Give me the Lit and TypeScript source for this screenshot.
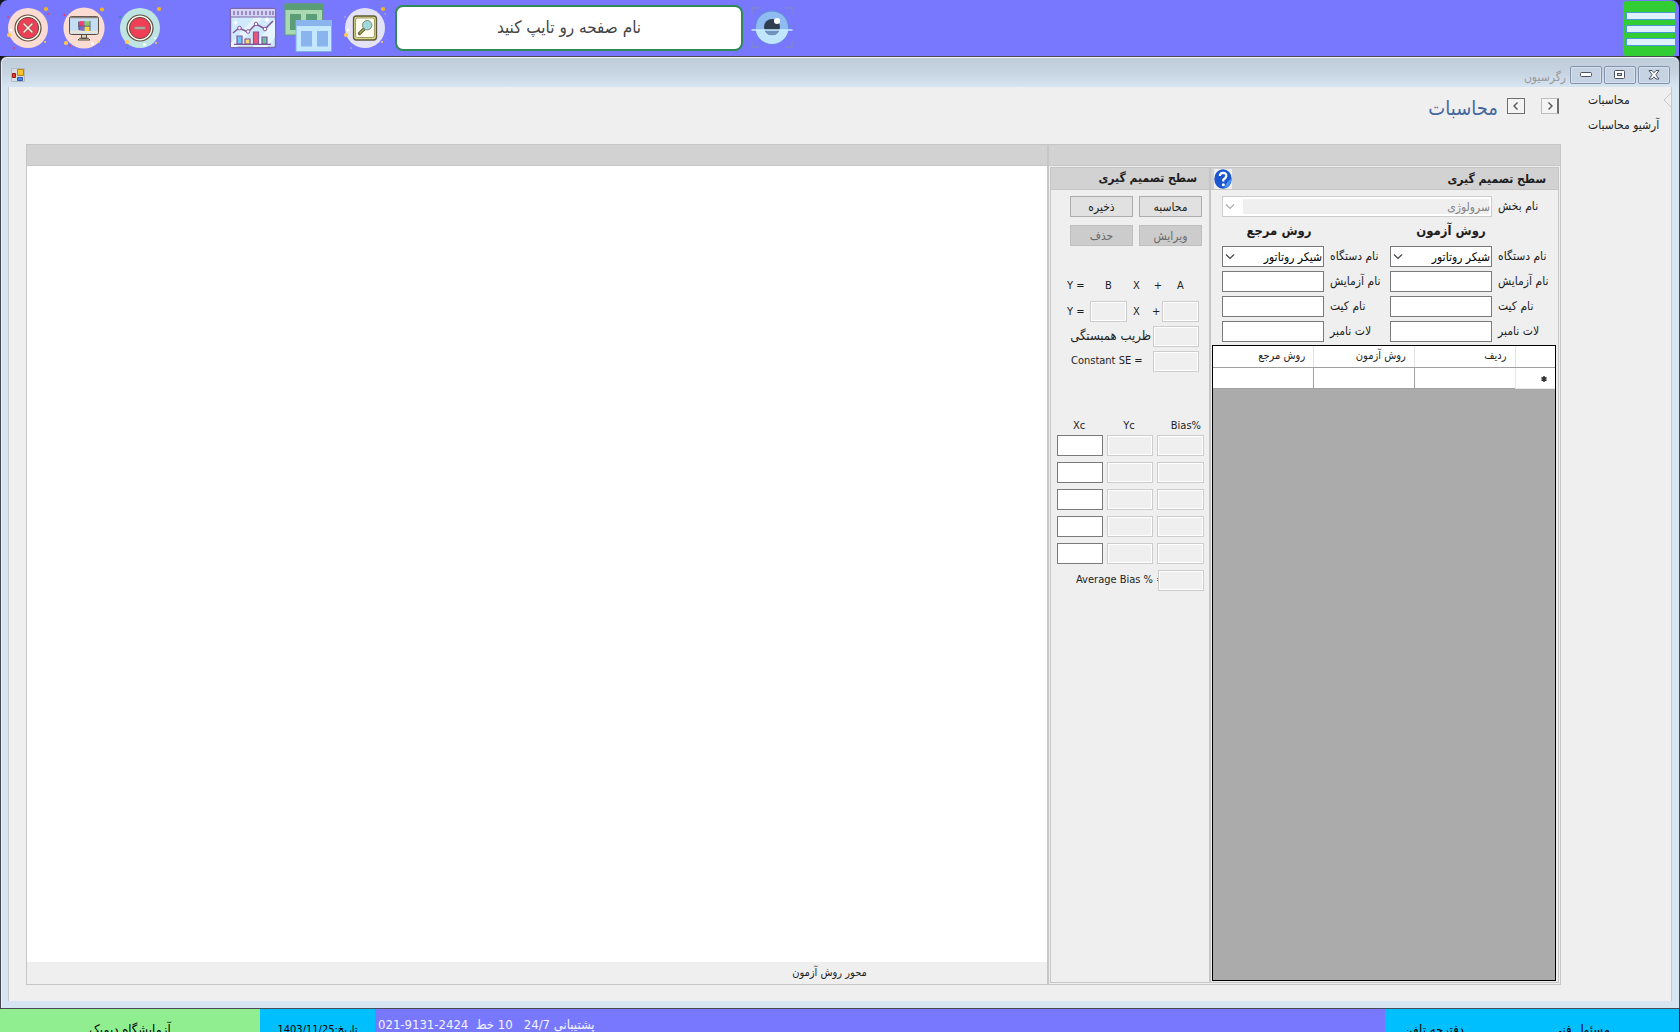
import { LitElement, html, css, svg } from "lit";
import { customElement } from "lit/decorators.js";

const chevron = svg`<path d="M1 1.5 L5 5.5 L9 1.5" fill="none" stroke="currentColor" stroke-width="1.2"/>`;

const closeIcon = html`<svg viewBox="0 0 44 44" width="44" height="44" aria-hidden="true">
  <circle cx="22" cy="22" r="20" fill="#fadcd2"/>
  <circle cx="22" cy="22" r="13" fill="#fffbef" stroke="#5d4c42" stroke-width="1.2"/>
  <circle cx="22" cy="22" r="10.6" fill="#ef3e55" stroke="#5d4c42" stroke-width="1"/>
  <path d="M18 18 L26 26 M26 18 L18 26" stroke="#8a5a50" stroke-width="2.8" stroke-linecap="round"/>
  <path d="M18 18 L26 26 M26 18 L18 26" stroke="#fff4e6" stroke-width="1.5" stroke-linecap="round"/>
  <circle cx="40" cy="3" r="2.1" fill="#f3b51f"/><circle cx="42" cy="8" r="1" fill="#ef3e55"/>
  <circle cx="3" cy="29" r="2.1" fill="#ffc94d"/><circle cx="5" cy="24" r="1.3" fill="#fff"/>
  <circle cx="2" cy="11" r="1" fill="#ef3e55"/><circle cx="8" cy="42" r="1" fill="#ef3e55"/><circle cx="39" cy="36" r="1.1" fill="#ffc94d"/>
</svg>`;

const monitorIcon = html`<svg viewBox="0 0 44 44" width="44" height="44" aria-hidden="true">
  <circle cx="22" cy="22" r="20.6" fill="#fadcd2"/>
  <rect x="7.500" y="10.500" width="29" height="18" rx="2" fill="#c3ddf3" stroke="#5d4c42"/>
  <path d="M8 26 H36" stroke="#e8e4d8" stroke-width="2.6"/>
  <path d="M8 11.500 H36" stroke="#8b8178" stroke-width="1.500"/>
  <path d="M19.500 29 V32.500 H24.500 V29 M16 34 Q17 32 20 32 H24 Q27 32 28 34 Z" fill="#d9d4c0" stroke="#5d4c42"/>
  <path d="M17 15.500 Q19 14.800 21.500 15.300 V20 H16.700 Z" fill="#ef3e74"/>
  <path d="M22.500 15.300 H27.500 V20 H22.500 Z" fill="#8cc66a"/>
  <path d="M16.700 20.500 H21.500 V25 Q19 24 17 24.200 Z" fill="#7a63c9"/>
  <path d="M22.500 20.500 H27.500 V25 H22.500 Z" fill="#f3d94b"/>
  <path d="M22 15 V25 M16.500 20.200 H28 M16.500 15.500 L17 24 M28 15 V25" stroke="#4f4660" stroke-width=".8" fill="none"/>
  <circle cx="40" cy="3.500" r="2.100" fill="#f3b51f"/><circle cx="2.500" cy="9" r="1.100" fill="#ef3e55"/>
  <circle cx="4" cy="37" r="2.100" fill="#ffc94d"/><circle cx="8" cy="40" r="1" fill="#ef3e55"/>
  <circle cx="30.500" cy="37.500" r="1.500" fill="#fff"/><circle cx="37" cy="36" r="1" fill="#ffc94d"/>
</svg>`;

const minusIcon = html`<svg viewBox="0 0 44 44" width="44" height="44" aria-hidden="true">
  <circle cx="22" cy="22" r="20" fill="#bfe5e2"/>
  <circle cx="22" cy="22" r="13" fill="#fffbef" stroke="#5d4c42" stroke-width="1.2"/>
  <circle cx="22" cy="22" r="10.600" fill="#ef3e55" stroke="#5d4c42" stroke-width="1"/>
  <path d="M17.500 22 H26.500" stroke="#8d8a80" stroke-width="2.800" stroke-linecap="round"/>
  <path d="M17.500 22 H26.500" stroke="#c9c5b5" stroke-width="1.200" stroke-linecap="round"/>
  <circle cx="41" cy="3" r="2.100" fill="#f3b51f"/><circle cx="2" cy="11" r="1.100" fill="#1c9c9c"/>
  <circle cx="9" cy="36" r="2.100" fill="#ffc94d"/><circle cx="9.500" cy="42" r="1" fill="#1c9c9c"/>
  <circle cx="26.500" cy="38.500" r="1.500" fill="#fff"/><circle cx="38" cy="37" r="1.100" fill="#ffc94d"/><circle cx="37" cy="32" r="1" fill="#fff"/>
</svg>`;

const chartIcon = html`<svg viewBox="0 0 48 42" width="48" height="42" aria-hidden="true">
  <rect x="1.500" y="1.500" width="45" height="39" rx="1.500" fill="#cfeafc" stroke="#7d68ac" stroke-width="1.400"/>
  <path d="M24 40 L46 12 V30 L38 40 Z M2 36 L26 10 H34 L8 40 H2 Z" fill="#e6f5ff"/>
  <path d="M2 2 H46 V10 H2 Z" fill="#d5d3f3"/><path d="M2 10 H46" stroke="#7d68ac" stroke-width="1.200"/>
  ${[5, 9, 13, 17, 21, 25, 29, 33, 37, 41, 44].map((x) => svg`<path d="M${x} 4 V8" stroke="#7d68ac" stroke-width="1.300"/>`)}
  <path d="M4 26 L10 21 L19 25 L27 17 L36 22 L44 14" fill="none" stroke="#84559a" stroke-width="1.500"/>
  <circle cx="10.500" cy="21" r="1.800" fill="#fff" stroke="#84559a"/><circle cx="19" cy="24.500" r="1.800" fill="#fff" stroke="#84559a"/>
  <circle cx="27" cy="17" r="1.800" fill="#fff" stroke="#84559a"/><circle cx="36" cy="22" r="1.800" fill="#fff" stroke="#84559a"/>
  <g stroke="#84559a" stroke-width="1.200"><path d="M8 37 V29 H13 V37 Z" fill="#6cc6f2"/><path d="M16 37 V32 H21 V37 Z" fill="#f6dc76"/>
  <path d="M24.500 37 V25 H29.500 V37 Z" fill="#ee5777"/><path d="M33 37 V30 H38 V37 Z" fill="#6ac3a2"/><path d="M5 37.300 H42"/></g>
  <path d="M6.500 12.500 L7.300 15 L9.500 15.700 L7.300 16.500 L6.500 19 L5.700 16.500 L3.500 15.700 L5.700 15 Z M38 10 L39 12 L41 13 L39 14 L38 16 L37 14 L35 13 L37 12 Z" fill="#fff"/>
</svg>`;

const windowsIcon = html`<svg viewBox="0 0 48 50" width="48" height="50" aria-hidden="true">
  <path d="M1 1 H38.500 V32 H1 Z" fill="#a9d8b1" stroke="#5f9f79"/><path d="M.5 .5 H39 V7 H.5 Z" fill="#5b9d76"/>
  <path d="M6 11 H17 V27 H6 Z M22 11 H33 V20 H22 Z" fill="#5b9d76"/>
  <path d="M12 17.500 H47.500 V48.500 H12 Z" fill="#c3e8ff" stroke="#7daee4"/><path d="M12 17 H48 V23 H12 Z" fill="#8ab4ee"/>
  <path d="M17 28 H28 V43.500 H17 Z M33 28 H44 V43.500 H33 Z" fill="#8ab4ee"/>
</svg>`;

const searchIcon = html`<svg viewBox="0 0 44 44" width="44" height="44" aria-hidden="true">
  <circle cx="22" cy="22" r="20" fill="#e3e2f6"/>
  <rect x="10.500" y="10" width="23" height="24" rx="3" fill="#d9d787" stroke="#5f5b38" stroke-width="1.300"/>
  <rect x="12.500" y="12" width="19" height="19.500" rx="2" fill="#fffbef" stroke="#8c8850" stroke-width=".8"/>
  <path d="M21 23 L16.500 27.500" stroke="#5f6138" stroke-width="3.200" stroke-linecap="round"/>
  <path d="M20.500 23.500 L17 27" stroke="#a9ad4f" stroke-width="1.400" stroke-linecap="round"/>
  <circle cx="24.200" cy="19.200" r="4.700" fill="#9fdad9" stroke="#768a82"/>
  <circle cx="40" cy="3" r="2.100" fill="#f3b51f"/><circle cx="42" cy="8" r="1" fill="#a5a3c8"/><circle cx="2" cy="11" r="1" fill="#a5a3c8"/>
  <circle cx="3" cy="29" r="2.100" fill="#ffc94d"/><circle cx="5" cy="24" r="1.300" fill="#fff"/>
  <circle cx="8" cy="42" r="1" fill="#a5a3c8"/><circle cx="39" cy="36" r="1.100" fill="#ffc94d"/>
</svg>`;

const eyeIcon = html`<svg viewBox="0 0 42 42" width="42" height="42" aria-hidden="true">
  <path d="M1 7 V1 H8 M34 1 H41 V7 M41 34 V40 H34 M8 40 H1 V34" fill="none" stroke="#7d88c9" stroke-width="1.400"/>
  <circle cx="21" cy="20.500" r="16.500" fill="#8ebcf0" stroke="#5b8fd0" stroke-width="1"/>
  <path d="M4.700 23 H37.300 A16.500 16.500 0 0 1 4.700 23 Z" fill="#bfe6fd"/>
  <circle cx="21" cy="20" r="8" fill="#303f50"/><path d="M13.500 23 H28.500 A8 8 0 0 1 13.500 23 Z" fill="#6f93bd"/>
  <circle cx="26" cy="14" r="3" fill="#fff"/><path d="M.5 23 H41.500" stroke="#c9edff" stroke-width="1.300"/>
</svg>`;

const helpIcon = html`<svg viewBox="0 0 18 20" width="18" height="20" aria-hidden="true">
  <rect width="18" height="20" fill="#efefef"/><ellipse cx="9" cy="10" rx="8.700" ry="9.800" fill="#1c57d0"/>
  <path d="M10 19.500 Q17 17 17.600 10 Q13 11 10 19.500 Z" fill="#4b93f2"/>
  <path d="M5.800 7 Q6 3.800 9.200 3.800 Q12.500 4 12.300 7 Q12 9 9.300 10.600 V12.500" fill="none" stroke="#fff" stroke-width="2.200"/>
  <circle cx="9.300" cy="15.800" r="1.500" fill="#fff"/>
</svg>`;

@customElement("app-toolbar")
class AppToolbar extends LitElement {
  static styles = css`
    :host { display: block; }
    .bar { display: flex; align-items: center; height: 56px; padding: 0 4px 0 6px; background: #7878ff; border-radius: 8px 8px 0 0; }
    button { display: flex; padding: 0; border: 0; background: none; }
    .system { display: flex; gap: 12px; }
    .pages { display: flex; align-items: center; gap: 7px; margin-left: 67px; }
    .find { margin-left: 4px; }
    .search { width: 348px; height: 46px; box-sizing: border-box; margin: 0 8px; padding: 0 12px 3px; border: 2px solid #2e8b57; border-radius: 8px;
      background: #fff; text-align: center; font: 17px "DejaVu Sans Condensed", "DejaVu Sans", sans-serif; color: #444; outline: none; }
    .search::placeholder { color: #444; opacity: 1; }
    .menu { width: 52px; height: 55px; box-sizing: border-box; margin: 1px 0 0 auto; padding: 1px 0 0 3px; flex-direction: column; justify-content: center; gap: 5px; border-radius: 4px; background: #32cd32; }
    .line { height: 8px; box-sizing: border-box; border: 1px solid #4a98d8; border-right: 0; background: #dff0ff; }
  `;
  render() {
    return html`<header class="bar">
      <div class="system">
        <button aria-label="بستن">${closeIcon}</button>
        <button aria-label="دسکتاپ">${monitorIcon}</button>
        <button aria-label="کوچک کردن">${minusIcon}</button>
      </div>
      <div class="pages">
        <button aria-label="نمودار">${chartIcon}</button>
        <button aria-label="پنجره‌ها">${windowsIcon}</button>
        <button class="find" aria-label="جستجو">${searchIcon}</button>
      </div>
      <input class="search" dir="rtl" type="text" aria-label="نام صفحه" placeholder="نام صفحه رو تایپ کنید" />
      <button aria-label="نمایش">${eyeIcon}</button>
      <button class="menu" aria-label="منو"><span class="line"></span><span class="line"></span><span class="line"></span></button>
    </header>`;
  }
}

@customElement("decision-inputs")
class DecisionInputs extends LitElement {
  static styles = css`
    :host { display: flex; flex-direction: column; font: 12px "DejaVu Sans Condensed", "DejaVu Sans", sans-serif; color: #1e1e1e; }
    .title { display: flex; align-items: center; justify-content: space-between; height: 21px; margin: 0; padding: 0 12px 0 3px; background: #d2d2d2; border-bottom: 1px solid #c6c6c6; }
    h2 { margin: 0; font-size: 12px; line-height: 20px; }
    .help { display: flex; padding: 0; border: 0; background: none; }
    .form { display: grid; grid-template-columns: 60px 102px 54px 102px; column-gap: 6px; row-gap: 4px; align-items: center; padding: 6px 0 3px 12px; }
    .form > * { height: 21px; box-sizing: border-box; }
    label { line-height: 20px; text-align: left; white-space: nowrap; }
    .wide { grid-column: 2 / -1; }
    h3 { margin: 0; font-size: 13px; line-height: 20px; text-align: center; }
    h3.head { grid-column: 2; padding-left: 20px; }
    h3.ref { grid-column: 4; padding-left: 12px; }
    input, select { width: 100%; height: 21px; box-sizing: border-box; border: 1px solid #7a7a7a; border-radius: 0; background: #fff; font: inherit; color: #000; padding: 0 1px; outline: none; }
    select { appearance: none; opacity: 1; }
    select:disabled { border-color: #cccccc; color: #838383; background: linear-gradient(90deg, #fff 20px, #efefef 20px); box-shadow: inset 0 0 0 2px #fff; }
    .pick { position: relative; }
    .pick svg { position: absolute; left: 3px; top: 7px; color: #444; pointer-events: none; }
    .wide svg { color: #aaa; }
    .grid { flex: 1; margin: 0 2px 1px 1px; border: 1px solid #000; background: #ababab; }
    table { width: 100%; border-collapse: collapse; table-layout: fixed; background: #fff; font-size: 11px; }
    th, td { height: 21px; padding: 0 8px 0 0; box-sizing: border-box; font-weight: 400; text-align: right; line-height: 18px; }
    th { border-left: 1px solid #e3e3e3; border-bottom: 1px solid #a0a0a0; color: #1e1e1e; }
    td { border-left: 1px solid #a0a0a0; border-bottom: 1px solid #a0a0a0; }
    tr > :last-child { border-left: 0; }
    td.mark { border-left-color: #e8e8e8; border-bottom-color: #e8e8e8; }
    .mark svg { display: block; margin-top: 3px; }
    .c0 { width: 40px; }
  `;
  private pick(id: string) {
    return html`<span class="pick"><select id=${id} dir="rtl"><option>شیکر روتاتور</option></select>
      <svg width="10" height="7" viewBox="0 0 10 7">${chevron}</svg></span>`;
  }
  render() {
    const rows = ["نام آزمایش", "نام کیت", "لات نامبر"];
    return html`
      <div class="title" dir="ltr"><button class="help" aria-label="راهنما">${helpIcon}</button><h2 dir="rtl">سطح تصمیم گیری</h2></div>
      <form class="form" dir="rtl">
        <label for="dept">نام بخش</label>
        <span class="pick wide"><select id="dept" dir="rtl" disabled><option>سرولوژی</option></select>
          <svg width="10" height="7" viewBox="0 0 10 7">${chevron}</svg></span>
        <h3 class="head">روش آزمون</h3><h3 class="ref">روش مرجع</h3>
        <label for="dt">نام دستگاه</label>${this.pick("dt")}<label for="dr">نام دستگاه</label>${this.pick("dr")}
        ${rows.map((r, i) => html`<label for="t${i}">${r}</label><input id="t${i}" type="text" /><label for="r${i}">${r}</label><input id="r${i}" type="text" />`)}
      </form>
      <div class="grid" dir="rtl">
        <table>
          <colgroup><col class="c0" /><col /><col /><col /></colgroup>
          <thead><tr><th></th><th>ردیف</th><th>روش آزمون</th><th>روش مرجع</th></tr></thead>
          <tbody><tr><td class="mark"><svg width="6" height="8" viewBox="0 0 6 8"><path d="M3 1 V7 M.5 2.500 L5.500 5.500 M5.500 2.500 L.5 5.500" stroke="#333" stroke-width="1.500"/></svg></td><td></td><td></td><td></td></tr></tbody>
        </table>
      </div>`;
  }
}

@customElement("decision-results")
class DecisionResults extends LitElement {
  static styles = css`
    :host { display: flex; flex-direction: column; font: 11px "DejaVu Sans Condensed", "DejaVu Sans", sans-serif; color: #1e1e1e; }
    h2 { height: 21px; margin: 0; padding-right: 12px; line-height: 20px; font-size: 12px; background: #d2d2d2; border-bottom: 1px solid #c6c6c6; }
    .actions { display: grid; grid-template-columns: 63px 63px; gap: 8px 6px; padding: 6px 0 0 19px; justify-content: start; }
    button { height: 21px; padding: 0; border: 1px solid #adadad; background: #e1e1e1; font: inherit; font-size: 12px; color: #1e1e1e; }
    button:disabled { border-color: #bfbfbf; background: #cccccc; color: #6a6a6a; }
    input { width: 100%; height: 21px; box-sizing: border-box; border: 1px solid #7a7a7a; border-radius: 0; background: #fff; padding: 0 2px; font: inherit; outline: none; }
    input:disabled { border-color: #cccccc; background: #efefef; box-shadow: inset 0 0 0 1px #fff; }
    .equation { display: grid; grid-template-columns: 23px 37px 25px 10px 37px; row-gap: 5px; align-items: center; padding: 30px 0 0 16px; line-height: 20px; }
    .x { padding-left: 6px; }
    .mid { text-align: center; }
    .end { text-align: right; }
    .near { text-align: left; }
    .stats { display: grid; grid-template-columns: 80px 46px; gap: 4px 2px; padding: 4px 0 0 20px; line-height: 20px; white-space: nowrap; }
    .stats .fa { font-size: 13px; }
    .points { margin: 43px 0 0 6px; border-collapse: separate; border-spacing: 0; table-layout: fixed; width: 147px; }
    .points th { height: 20px; padding: 0 6px 0 0; font-weight: 400; vertical-align: middle; }
    .points td { padding: 0 4px 6px 0; line-height: 0; }
    .points td + td + td { padding-right: 0; }
    .points th + th + th { padding-right: 3px; text-align: right; }
    .average { display: grid; grid-template-columns: 82px 46px; padding-left: 25px; line-height: 20px; }
    .average label { overflow: hidden; white-space: nowrap; }
    .c1, .c2 { width: 50px; }
  `;
  render() {
    return html`
      <h2 dir="rtl">سطح تصمیم گیری</h2>
      <div class="actions" dir="ltr">
        <button>ذخیره</button><button>محاسبه</button>
        <button disabled>حذف</button><button disabled>ویرایش</button>
      </div>
      <div class="equation">
        <span>Y =</span><span class="mid">B</span><span class="x">X</span><span class="end">+</span><span class="mid">A</span>
        <span>Y =</span><input disabled aria-label="B" /><span class="x">X</span><span class="near">+</span><input disabled aria-label="A" />
      </div>
      <div class="stats">
        <label class="fa" for="corr" dir="rtl">ظریب همبستگی</label><input id="corr" disabled />
        <label for="se">Constant SE =</label><input id="se" disabled />
      </div>
      <table class="points">
        <colgroup><col class="c1" /><col class="c2" /><col /></colgroup>
        <thead><tr><th>Xc</th><th>Yc</th><th>Bias%</th></tr></thead>
        <tbody>${[1, 2, 3, 4, 5].map((n) => html`<tr>
          <td><input aria-label="Xc ${n}" /></td><td><input disabled aria-label="Yc ${n}" /></td><td><input disabled aria-label="Bias% ${n}" /></td></tr>`)}</tbody>
      </table>
      <div class="average"><label for="avg">Average Bias % =</label><input id="avg" disabled /></div>`;
  }
}

@customElement("app-root")
class AppRoot extends LitElement {
  static styles = css`
    :host { display: block; font: 11px "DejaVu Sans Condensed", "DejaVu Sans", sans-serif; color: #1e1e1e; background: #15171c; }
    .app { display: flex; flex-direction: column; height: 100vh; overflow: hidden; }
    app-toolbar { margin-right: 1px; }
    .window { flex: 1; min-height: 0; display: flex; flex-direction: column; padding: 0 7px 7px; border: 1px solid #4a4a55; border-radius: 7px 7px 0 0;
      background: linear-gradient(#bfccda, #c6d3e0 15px, #d7e4f2 30px); box-shadow: inset 0 1px #f4f6fa, inset 1px 0 #e8eff7; }
    .caption { display: flex; align-items: center; gap: 2px; height: 30px; box-sizing: border-box; padding: 6px 2px 0 3px; }
    .caption svg { display: block; }
    .name { margin: 4px 2px 0 auto; font-size: 12px; font-weight: 400; color: #999; }
    .ctl { display: grid; place-items: center; width: 32px; height: 18px; padding: 0; border: 1px solid #8592ad; border-radius: 2px; background: #c6d3e2; box-shadow: inset 0 0 0 1px #d6e1ed; }
    .body { flex: 1; min-height: 0; display: flex; background: #efefef; border: solid #c4c8cc; border-width: 0 1px; }
    .main { flex: 1; display: flex; flex-direction: column; padding: 0 0 16px 17px; }
    .head { display: flex; justify-content: flex-end; align-items: flex-start; height: 46px; padding: 11px 2px 0 0; }
    h1 { margin: 0 9px 0 0; font-size: 20px; line-height: 20px; font-weight: 400; color: #4668a0; }
    .nav { display: grid; place-items: center; width: 18px; height: 16px; padding: 0; border: 1px solid #6e6e6e; background: #f4f4f4; }
    .nav.last { margin-left: 16px; border-color: #bdbdbd; border-right: 2px solid #6e6e6e; }
    .panels { flex: 1; display: flex; border: 1px solid #c6c6c6; }
    .strip { height: 20px; background: #d2d2d2; border-bottom: 1px solid #c6c6c6; }
    .plot { flex: 1; display: flex; flex-direction: column; border-right: 2px solid #c6c6c6; }
    .canvas { flex: 1; background: #fff; }
    .axis { height: 22px; padding-left: 585px; text-align: center; line-height: 22px; }
    .side { display: flex; flex-direction: column; }
    .groups { flex: 1; display: flex; margin: 1px; border: 1px solid #c6c6c6; }
    decision-results { width: 158px; }
    decision-inputs { width: 347px; border-left: 2px solid #c6c6c6; }
    .tabs { display: flex; width: 110px; justify-content: space-between; }
    ul { margin: 0; padding: 1px 0 0 27px; list-style: none; font-size: 12px; }
    li { line-height: 25px; white-space: nowrap; }
    a { color: inherit; text-decoration: none; }
    .point { margin-top: 5px; }
    .status { display: flex; height: 23px; margin-right: 1px; overflow: hidden; background: #7878ff; }
    .lab { width: 260px; background: #90ee90; text-align: center; font-size: 13px; line-height: 42px; color: #000; }
    .date { width: 115px; background: #00bfff; text-align: center; font-size: 11px; line-height: 42px; color: #000; }
    .support { flex: 1; padding-left: 3px; font-size: 13px; line-height: 32px; color: #f4f4ff; text-align: left; white-space: pre; }
    .roles { display: flex; width: 294px; justify-content: space-between; padding: 0 69px 0 19px; box-sizing: border-box; background: #00bfff; font-size: 13px; line-height: 42px; color: #000; }
  `;
  render() {
    return html`<div class="app">
      <app-toolbar></app-toolbar>
      <section class="window">
        <div class="caption">
          <svg width="14" height="14" viewBox="0 0 14 14"><path d="M.5 .5 H13.500 V13.500 H.5 Z" fill="#d7dde3" stroke="#b4b9be"/><path d="M6.500 1.500 H12.500 V7.500 H6.500 Z" fill="#fbc52d" stroke="#b98212"/><path d="M1.500 5.500 H4.500 V9.500 H1.500 Z" fill="#e03a2a" stroke="#9c1c12"/><path d="M6.500 9.500 H11.500 V12.500 H6.500 Z" fill="#4b8bf0" stroke="#2b58b8"/></svg>
          <span class="name" dir="rtl">رگرسیون</span>
          <button class="ctl" aria-label="Minimize"><svg width="12" height="6" viewBox="0 0 12 6"><rect x=".5" y=".5" width="11" height="4" rx="1" fill="#fff" stroke="#4c5160"/></svg></button>
          <button class="ctl" aria-label="Maximize"><svg width="12" height="10" viewBox="0 0 12 10"><rect x=".5" y=".5" width="10" height="8" rx="1" fill="#fff" stroke="#4c5160"/><rect x="3.500" y="3.500" width="4" height="2" fill="#c6d3e2" stroke="#4c5160"/></svg></button>
          <button class="ctl" aria-label="Close"><svg width="12" height="10" viewBox="0 0 12 10"><path d="M1 .5 H4 L6 2.800 L8 .5 H11 L7.800 4.800 L11 9 H8 L6 6.800 L4 9 H1 L4.200 4.800 Z" fill="#fff" stroke="#4c5160"/></svg></button>
        </div>
        <div class="body">
          <main class="main">
            <div class="head">
              <h1 dir="rtl">محاسبات</h1>
              <button class="nav" aria-label="قبلی"><svg width="6" height="8" viewBox="0 0 6 8"><path d="M4.500 .5 L1 4 L4.500 7.500" fill="none" stroke="#555" stroke-width="1.400"/></svg></button>
              <button class="nav last" aria-label="بعدی"><svg width="6" height="8" viewBox="0 0 6 8"><path d="M1.500 .5 L5 4 L1.500 7.500" fill="none" stroke="#555" stroke-width="1.400"/></svg></button>
            </div>
            <div class="panels">
              <section class="plot"><div class="strip"></div><div class="canvas"></div><div class="axis" dir="ltr">محور روش آزمون</div></section>
              <section class="side"><div class="strip"></div>
                <div class="groups"><decision-results></decision-results><decision-inputs></decision-inputs></div>
              </section>
            </div>
          </main>
          <nav class="tabs">
            <ul><li><a href="#calc">محاسبات</a></li><li><a href="#archive">آرشیو محاسبات</a></li></ul>
            <svg class="point" width="8" height="16" viewBox="0 0 8 16"><path d="M8 1 L1 8 L8 15" fill="none" stroke="#c8c8c8"/></svg>
          </nav>
        </div>
      </section>
      <footer class="status">
        <span class="lab" dir="rtl">آزمایشگاه دیمیک</span>
        <span class="date" dir="rtl">تاریخ:1403/11/25</span>
        <span class="support" dir="rtl">پشتیبانی 24/7   10 خط  <bdi dir="ltr">021-9131-2424</bdi></span>
        <span class="roles"><span dir="rtl">دفترچه تلفن</span><span dir="rtl">مسئول فنی</span></span>
      </footer>
    </div>`;
  }
}
